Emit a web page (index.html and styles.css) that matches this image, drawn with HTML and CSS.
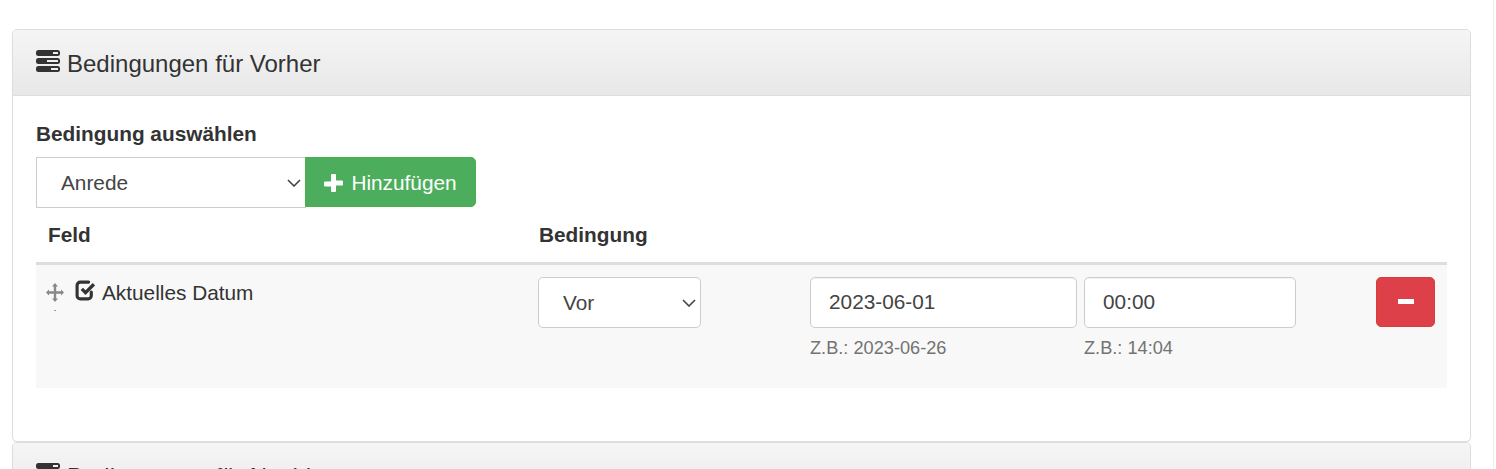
FILE: index.html
```html
<!DOCTYPE html>
<html lang="de">
<head>
<meta charset="utf-8">
<title>Bedingungen</title>
<link rel="stylesheet" href="styles.css">
</head>
<body>
<div class="top-shadow"></div>
<main class="page">
  <section class="panel">
    <header class="panel-heading">
      <svg class="server-icon" viewBox="0 0 24 22"><path fill-rule="evenodd" d="M2.500 0h19a2.500 2.500 0 0 1 2.500 2.500v1a2.500 2.500 0 0 1-2.500 2.500h-19A2.500 2.500 0 0 1 0 3.500v-1A2.500 2.500 0 0 1 2.500 0zM17 2v2h5V2zM2.500 8h19a2.500 2.500 0 0 1 2.500 2.500v1a2.500 2.500 0 0 1-2.500 2.500h-19A2.500 2.500 0 0 1 0 11.500v-1A2.500 2.500 0 0 1 2.500 8zM11 10v2h11v-2zM2.500 16h19a2.500 2.500 0 0 1 2.500 2.500v1a2.500 2.500 0 0 1-2.500 2.500h-19A2.500 2.500 0 0 1 0 19.500v-1A2.500 2.500 0 0 1 2.500 16zM15 18v2h7v-2z"/></svg>
      <h2 class="panel-title">Bedingungen für Vorher</h2>
    </header>
    <div class="panel-body">
      <label class="picker-label" for="cond">Bedingung auswählen</label>
      <div class="picker">
        <div class="select-wrap select-wrap-picker">
          <select id="cond" class="control select-square"><option>Anrede</option></select>
          <svg class="chevron" viewBox="0 0 14 8"><path d="M1 1l6 6 6-6"/></svg>
        </div>
        <button class="btn btn-add" type="button">
          <svg class="plus-icon" viewBox="0 0 19 18"><path d="M7 1a1 1 0 0 1 1-1h3a1 1 0 0 1 1 1v5.500h6a1 1 0 0 1 1 1v3a1 1 0 0 1-1 1h-6V17a1 1 0 0 1-1 1H8a1 1 0 0 1-1-1v-4.500H1a1 1 0 0 1-1-1v-3a1 1 0 0 1 1-1h6z"/></svg>Hinzufügen
        </button>
      </div>
      <div class="table-head">
        <div class="th">Feld</div>
        <div class="th">Bedingung</div>
      </div>
      <div class="table-row">
        <div class="field-cell">
          <span class="move-wrap">
            <svg class="move-icon" viewBox="0 0 18 19"><path d="M9 0l3 3.500h-1.800v4.800H15V6.500L18 9.500l-3 3v-1.800h-4.800v4.800H12L9 19l-3-3.500h1.800v-4.800H3v1.800L0 9.500l3-3v1.800h4.800V3.500H6z"/></svg>
            <span class="move-dot"></span>
          </span>
          <svg class="check-icon" viewBox="0 0 20 20"><path class="check-box" d="M15.500 11.500v3.500a3 3 0 0 1-3 3H5a3 3 0 0 1-3-3V5a3 3 0 0 1 3-3h8"/><path class="check-mark" d="M6.500 8.500l3.500 3.500L18 4"/></svg>
          <span>Aktuelles Datum</span>
        </div>
        <div class="cond-cell">
          <div class="select-wrap select-wrap-cond">
            <select class="control" aria-label="Bedingung"><option>Vor</option></select>
            <svg class="chevron" viewBox="0 0 14 8"><path d="M1 1l6 6 6-6"/></svg>
          </div>
        </div>
        <div class="date-cell">
          <input class="control input" type="text" value="2023-06-01" aria-label="Datum">
          <small class="hint">Z.B.: 2023-06-26</small>
        </div>
        <div class="time-cell">
          <input class="control input" type="text" value="00:00" aria-label="Zeit">
          <small class="hint">Z.B.: 14:04</small>
        </div>
        <div class="action-cell">
          <button class="btn btn-remove" type="button" aria-label="Entfernen"><span class="minus"></span></button>
        </div>
      </div>
    </div>
  </section>
  <section class="panel panel-next">
    <header class="panel-heading">
      <svg class="server-icon" viewBox="0 0 24 22"><path fill-rule="evenodd" d="M2.500 0h19a2.500 2.500 0 0 1 2.500 2.500v1a2.500 2.500 0 0 1-2.500 2.500h-19A2.500 2.500 0 0 1 0 3.500v-1A2.500 2.500 0 0 1 2.500 0zM17 2v2h5V2zM2.500 8h19a2.500 2.500 0 0 1 2.500 2.500v1a2.500 2.500 0 0 1-2.500 2.500h-19A2.500 2.500 0 0 1 0 11.500v-1A2.500 2.500 0 0 1 2.500 8zM11 10v2h11v-2zM2.500 16h19a2.500 2.500 0 0 1 2.500 2.500v1a2.500 2.500 0 0 1-2.500 2.500h-19A2.500 2.500 0 0 1 0 19.500v-1A2.500 2.500 0 0 1 2.500 16zM15 18v2h7v-2z"/></svg>
      <h2 class="panel-title">Bedingungen für Nachher</h2>
    </header>
  </section>
</main>
</body>
</html>
```
FILE: styles.css
```css
* { box-sizing: border-box; }
html, body {
  margin: 0;
  height: 469px;
  overflow: hidden;
  background: #fff;
}
body {
  font-family: "Liberation Sans", Arial, sans-serif;
  font-size: 20.8px;
  color: #333;
  border-right: 1px solid #eee;
  width: 1494px;
}
.top-shadow {
  height: 0;
  margin: 0 25px 0 12px;
  box-shadow: 0 1px 6px rgba(0, 0, 0, 0.16);
}
.page {
  width: 1459px;
  margin: 29px 0 0 12px;
}
.panel {
  border: 1px solid #ddd;
  border-radius: 5px;
  background: #fff;
  box-shadow: 0 1px 1px rgba(0, 0, 0, 0.05);
  height: 413px;
  overflow: hidden;
}
.panel-next { height: 60px; }
.panel-heading {
  height: 66px;
  display: flex;
  align-items: center;
  gap: 7px;
  padding: 0 23px;
  background: linear-gradient(#f5f5f5, #e8e8e8);
  border-bottom: 1px solid #ddd;
}
.server-icon { width: 24px; height: 22px; fill: #333; margin-top: -3px; flex: none; }
.panel-title {
  margin: 2px 0 0;
  font-size: 24px;
  font-weight: 400;
  line-height: 28px;
  color: #333;
  white-space: nowrap;
}
.panel-body { padding: 25px 23px 0; }
.picker-label {
  display: block;
  font-size: 20.8px;
  font-weight: 700;
  line-height: 25px;
  margin-bottom: 11px;
}
.picker { display: flex; height: 51px; }
.select-wrap { position: relative; }
.select-wrap-picker { width: 270px; }
.select-wrap-cond { width: 163px; }
.control {
  width: 100%;
  height: 51px;
  border: 1px solid #ccc;
  border-radius: 5px;
  background: #fff;
  font: 20.8px "Liberation Sans", Arial, sans-serif;
  color: #444;
  padding: 0 24px;
  appearance: none;
  display: block;
}
.select-square { border-radius: 0; }
.chevron {
  position: absolute;
  right: 5px;
  top: 22px;
  width: 14px;
  height: 8px;
  fill: none;
  stroke: #444;
  stroke-width: 1.6;
  pointer-events: none;
}
.btn {
  border: 1px solid transparent;
  font: 20.8px "Liberation Sans", Arial, sans-serif;
  color: #fff;
  cursor: pointer;
}
.btn-add {
  width: 171px;
  height: 50px;
  margin-left: -1px;
  display: flex;
  align-items: center;
  justify-content: center;
  gap: 8px;
  padding: 1px 0 0;
  border-radius: 0 5px 5px 0;
  background: #4cae5c;
  border-color: #4cae4c;
  position: relative;
}
.plus-icon { width: 19px; height: 18px; fill: #fff; flex: none; }
.table-head {
  display: grid;
  grid-template-columns: 491px 1fr;
  align-items: center;
  padding: 0 12px;
  border-bottom: 3px solid #ddd;
  height: 57px;
}
.th { font-weight: 700; line-height: 25px; margin-top: -1px; }
.table-row {
  display: grid;
  grid-template-columns: 502px 272px 274px 212px 1fr;
  height: 123px;
  background: #f8f8f8;
  padding: 12px 12px 0 0;
}
.field-cell {
  display: flex;
  align-items: flex-start;
  color: #333;
  line-height: 25px;
  padding-left: 10px;
  margin-top: 3px;
}
.move-wrap { width: 29px; display: block; padding-top: 3px; flex: none; }
.move-icon { display: block; width: 18px; height: 19px; fill: #888; }
.move-dot {
  display: block;
  width: 2px;
  height: 1px;
  margin: 8px 0 0 8px;
  background: #999;
}
.check-icon { width: 21px; height: 21px; margin: 0 6px 0 0; flex: none; }
.check-box { fill: none; stroke: #333; stroke-width: 3; stroke-linecap: round; }
.check-mark { fill: none; stroke: #333; stroke-width: 3.200; }
.hint {
  display: block;
  margin-top: 10px;
  font-size: 18.2px;
  line-height: 20px;
  color: #737373;
  white-space: nowrap;
}
.input { padding: 0 18px 1px; box-shadow: inset 0 1px 1px rgba(0, 0, 0, 0.05); }
.date-cell { padding-right: 7px; }
.action-cell { display: flex; justify-content: flex-end; }
.btn-remove {
  width: 59px;
  height: 50px;
  display: flex;
  align-items: center;
  justify-content: center;
  padding: 0 0 2px;
  border-radius: 5px;
  background: #de404a;
  border-color: #d43f3a;
}
.minus { width: 16px; height: 5px; background: #fff; display: block; }
```
